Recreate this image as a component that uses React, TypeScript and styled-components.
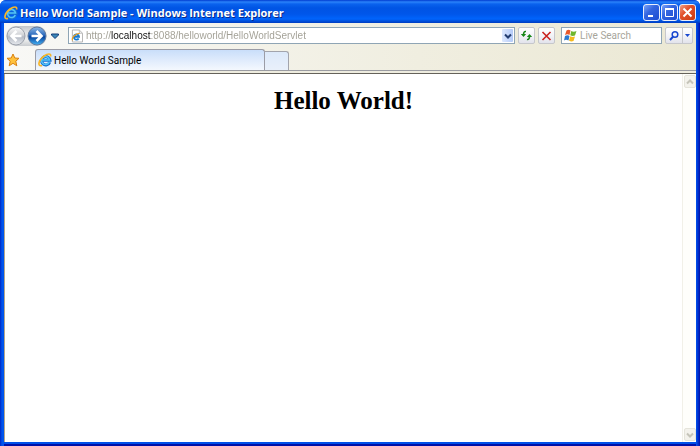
import React from "react";
import styled, { createGlobalStyle } from "styled-components";

const GlobalStyle = createGlobalStyle`
  * { box-sizing: border-box; }
  html, body { margin: 0; background: #fff; }
  body { font-family: Roboto, "Liberation Sans", sans-serif; font-size: 10px; }
  button, input { font: inherit; margin: 0; padding: 0; }
  svg { display: block; flex: none; }
`;

const Window = styled.div`
  height: 100vh;
  display: flex;
  flex-direction: column;
  border-radius: 6px 6px 0 0;
  background: linear-gradient(90deg, #0026c4 0, #0054ec 2px, #0054ec 4px, #0054ec calc(100% - 4px), #0042e0 calc(100% - 3px), #0010a8 100%);
  overflow: hidden;
`;

const TitleBar = styled.header`
  flex: none;
  height: 23px;
  padding: 2px 4px 0 4px;
  display: flex;
  align-items: center;
  gap: 2px;
  background: linear-gradient(#003bd0 0, #2a83fa 2px, #0a62ee 4px, #0054e4 8px, #0056ea 14px, #0064fc 19px, #0050dc 21px, #003cc0 23px);
`;

const Title = styled.h1`
  flex: 1;
  margin: 0;
  font: bold 11px/16px "Open Sans", sans-serif;
  color: #fff;
  text-shadow: 1px 1px 0 #0a2a88;
  white-space: nowrap;
`;

const CaptionButtons = styled.div`
  display: flex;
  gap: 1px;
`;

const CaptionButton = styled.button<{ $danger?: boolean }>`
  width: 17px;
  height: 17px;
  border: 1px solid #e8eefc;
  border-radius: 3px;
  display: grid;
  place-items: center;
  background: ${(p) =>
    p.$danger
      ? "linear-gradient(135deg, #f0a088, #e2512c 40%, #c93a10)"
      : "linear-gradient(135deg, #7ba2f6, #3365e0 40%, #1c4cd2)"};
`;

const Chrome = styled.div`
  flex: none;
  margin: 0 4px;
  background: linear-gradient(90deg, #f8f8f6, #f0eee0 60%, #ebe8d4);
`;

const NavBar = styled.nav`
  height: 25px;
  display: flex;
  align-items: center;
  padding: 0 3px 0 2px;
`;

const Travel = styled.div`
  display: flex;
  align-items: center;
  gap: 1px;
  margin-right: 6px;
`;

const TravelPair = styled.div`
  display: flex;
  gap: 1px;
  border-radius: 10px;
  background: linear-gradient(#c2c5ca, #dfe1e4 30%, #eceded 70%, #c9ccd0);
`;

const PlainButton = styled.button`
  border: 0;
  background: none;
  display: grid;
  place-items: center;
`;

const HistoryButton = styled(PlainButton)`
  width: 14px;
  height: 16px;
`;

const Field = styled.label<{ $search?: boolean }>`
  ${(p) => (p.$search ? "flex: none; width: 101px; margin: 0 3px;" : "flex: 1; min-width: 0; margin-right: 3px;")}
  height: 17px;
  display: flex;
  align-items: center;
  gap: 3px;
  padding: 0 1px 0 2px;
  border: 1px solid #8fa5b5;
  background: #fff;
`;

const TextInput = styled.input`
  flex: 1;
  min-width: 0;
  height: 15px;
  border: 0;
  outline: 0;
  background: none;
`;

const AddressInput = styled(TextInput)`
  font-family: "Liberation Sans", sans-serif;
  background: linear-gradient(90deg, #a09e93 25px, #111 25px, #111 65px, #a09e93 65px);
  background-clip: text;
  -webkit-background-clip: text;
  -webkit-text-fill-color: transparent;
`;

const SearchInput = styled(TextInput)`
  font-size: 10px;
  &::placeholder { color: #a7a59b; opacity: 1; }
`;

const DropButton = styled(PlainButton)`
  width: 11px;
  height: 13px;
  border-radius: 1px;
  background: linear-gradient(90deg, #dce8fe, #b4caf8);
`;

const ToolButton = styled.button`
  flex: none;
  width: 17px;
  height: 17px;
  margin-right: 3px;
  display: grid;
  place-items: center;
  border: 1px solid #c6c7cb;
  border-radius: 2px;
  background: linear-gradient(#fff, #f2f2f6 55%, #e2e3ec);
`;

const SearchGroup = styled.div`
  display: flex;
  height: 17px;
  border: 1px solid #c6c7cb;
  border-radius: 2px;
  background: linear-gradient(#fff, #f2f2f6 55%, #e2e3ec);
`;

const SearchPart = styled(PlainButton)<{ $narrow?: boolean }>`
  width: ${(p) => (p.$narrow ? 10 : 16)}px;
  ${(p) => p.$narrow && "border-left: 1px solid #c6c7cb;"}
`;

const TabBar = styled.div`
  height: 23px;
  display: flex;
  align-items: flex-end;
  border-bottom: 1px solid #9b9ca2;
`;

const FavoriteButton = styled(PlainButton)`
  width: 18px;
  height: 20px;
  margin-right: 13px;
`;

const Tab = styled.button`
  width: 230px;
  height: 21px;
  display: flex;
  align-items: center;
  gap: 2px;
  padding: 0 2px;
  border: 1px solid #9b9ca6;
  border-bottom: 0;
  border-radius: 3px 3px 0 0;
  background: linear-gradient(#c9defa, #dfebfc 50%, #f4f8fe);
  color: #000;
  text-align: left;
`;

const NewTab = styled.button`
  width: 24px;
  height: 19px;
  border: 1px solid #a2a4ac;
  border-left: 0;
  border-bottom: 0;
  border-radius: 0 3px 0 0;
  background: linear-gradient(#dce9fa, #e9f0fa);
`;

const Divider = styled.div`
  height: 3px;
  background: #eeecdf;
  border-bottom: 1px solid #65625a;
`;

const View = styled.div`
  flex: 1;
  min-height: 0;
  margin: 0 4px 4px;
  display: flex;
  background: #fff;
  border-left: 1px solid #b4a68c;
  box-shadow: 0 2px 0 #0050e8, 0 4px 0 #0010a8;
`;

const Page = styled.main`
  flex: 1;
  padding-top: 13px;
`;

const Heading = styled.h1`
  margin: 0;
  text-align: center;
  font: bold 25px/27px "Liberation Serif", serif;
  color: #000;
`;

const ScrollTrack = styled.div`
  flex: none;
  width: 14px;
  display: flex;
  flex-direction: column;
  justify-content: space-between;
  align-items: center;
  padding: 1px 0;
  border-left: 1px solid #f1f0e8;
  background: #fefefb;
`;

const ScrollButton = styled.button`
  width: 12px;
  height: 13px;
  display: grid;
  place-items: center;
  border: 1px solid #e5e4db;
  border-radius: 2px;
  background: #f3f2ec;
`;

function IeLogo() {
  return (
    <svg width="14" height="14" viewBox="0 0 28 28" fill="none" aria-hidden="true">
      <path d="M23.5 18.5A8.5 8.5 0 1 1 24 14.5H9" stroke="#1670d0" strokeWidth="6" />
      <path d="M22.5 18A8 8 0 1 1 23 14H9" stroke="#52c4f8" strokeWidth="3.2" />
      <path d="M8 25C-2 28 1 14 12 6C19 1 27 0 25 7" stroke="#f7b62a" strokeWidth="3.4" />
    </svg>
  );
}

function TravelIcon({ forward = false }: { forward?: boolean }) {
  const id = forward ? "travelForward" : "travelBack";
  return (
    <svg width="20" height="20" viewBox="0 0 20 20" fill="none" aria-hidden="true">
      <defs>
        <linearGradient id={id} x1="0" y1="0" x2="0" y2="1">
          <stop stopColor={forward ? "#8fb8e6" : "#fafafa"} />
          <stop offset=".45" stopColor={forward ? "#2b6abd" : "#d0d2d6"} />
          <stop offset=".55" stopColor={forward ? "#06439d" : "#b5bac4"} />
          <stop offset="1" stopColor={forward ? "#48b5f5" : "#e8ebef"} />
        </linearGradient>
      </defs>
      <circle cx="10" cy="10" r="9" fill={`url(#${id})`} stroke={forward ? "#5d799f" : "#9da2ac"} />
      <path
        d={forward ? "M4.5 10H14M9.5 5L14.5 10L9.5 15" : "M15.5 10H6M10.5 5L5.5 10L10.5 15"}
        stroke="#fff"
        strokeWidth="2.6"
      />
    </svg>
  );
}

function PageIcon() {
  return (
    <svg width="12" height="14" viewBox="0 0 13 14" fill="none" aria-hidden="true">
      <path d="M1.5 .5H9L12.5 4V13.5H1.5Z" fill="#fff" stroke="#b0b0b0" />
      <path d="M9 .5V4H12.5" stroke="#b8b8b8" />
      <path d="M8.3 9.6A2.8 2.8 0 1 1 8.7 7.8H3.5" stroke="#1478d0" strokeWidth="2" />
      <path d="M1.8 11.8C0 9.5 5 4 9.5 4" stroke="#f0a01c" strokeWidth="1.3" />
    </svg>
  );
}

function WindowsFlag() {
  return (
    <svg width="13" height="13" viewBox="0 0 26 26" aria-hidden="true">
      <path d="M5 3Q9 0 13 3L11 12Q7 9 2 12Z" fill="#e8582a" />
      <path d="M14.5 4Q19 7 25 4L22 13Q17 15 12.5 12.5Z" fill="#70b52c" />
      <path d="M2 14Q7 11 11 14L9 23Q4 20 0 23Z" fill="#2c79cf" />
      <path d="M12.5 14.5Q17 17 22 15L19 24Q14 26 10 23Z" fill="#f5b91d" />
    </svg>
  );
}

function Chevron({ up = false, color }: { up?: boolean; color: string }) {
  return (
    <svg width="8" height="6" viewBox="0 0 8 6" fill="none" aria-hidden="true">
      <path d={up ? "M1 4.5L4 1.5L7 4.5" : "M1 1.5L4 4.5L7 1.5"} stroke={color} strokeWidth="2" />
    </svg>
  );
}

export default function App() {
  return (
    <>
      <GlobalStyle />
      <Window>
        <TitleBar>
          <IeLogo />
          <Title>Hello World Sample - Windows Internet Explorer</Title>
          <CaptionButtons>
            <CaptionButton type="button" aria-label="Minimize">
              <svg width="13" height="13" viewBox="0 0 13 13"><path d="M3 9H8V11H3Z" fill="#fff" /></svg>
            </CaptionButton>
            <CaptionButton type="button" aria-label="Maximize">
              <svg width="13" height="13" viewBox="0 0 13 13" fill="none">
                <path d="M2.5 3V10.5H10.5V3" stroke="#fff" /><path d="M2 3H11" stroke="#fff" strokeWidth="2" />
              </svg>
            </CaptionButton>
            <CaptionButton type="button" aria-label="Close" $danger>
              <svg width="13" height="13" viewBox="0 0 13 13"><path d="M2.5 2.5L10.5 10.5M10.5 2.5L2.5 10.5" stroke="#fff" strokeWidth="2" /></svg>
            </CaptionButton>
          </CaptionButtons>
        </TitleBar>

        <Chrome>
          <NavBar aria-label="Navigation">
            <Travel>
              <TravelPair>
                <PlainButton type="button" aria-label="Back"><TravelIcon /></PlainButton>
                <PlainButton type="button" aria-label="Forward"><TravelIcon forward /></PlainButton>
              </TravelPair>
              <HistoryButton type="button" aria-label="Recent pages">
                <svg width="8" height="6" viewBox="0 0 8 6"><path d="M.5 1H7.5V2L4 5.5L.5 2Z" fill="#3b87b8" stroke="#123c78" /></svg>
              </HistoryButton>
            </Travel>
            <Field>
              <PageIcon />
              <AddressInput
                type="text"
                aria-label="Address"
                spellCheck={false}
                defaultValue="http://localhost:8088/helloworld/HelloWorldServlet"
              />
              <DropButton type="button" aria-label="Show addresses"><Chevron color="#233d70" /></DropButton>
            </Field>
            <ToolButton type="button" aria-label="Refresh">
              <svg width="13" height="13" viewBox="0 0 13 13" fill="none">
                <path d="M6 2.5Q3.5 2 3.5 6M7 10.5Q9.5 11 9.5 7" stroke="#168716" strokeWidth="1.6" />
                <path d="M.8 5H6.2L3.5 8ZM6.8 8H12.2L9.5 5Z" fill="#168716" />
              </svg>
            </ToolButton>
            <ToolButton type="button" aria-label="Stop">
              <svg width="13" height="13" viewBox="0 0 13 13"><path d="M2.5 3L10.5 11M10.5 3L2.5 11" stroke="#c9201c" strokeWidth="1.6" /></svg>
            </ToolButton>
            <Field $search>
              <WindowsFlag />
              <SearchInput type="text" aria-label="Live Search" placeholder="Live Search" />
            </Field>
            <SearchGroup>
              <SearchPart type="button" aria-label="Search">
                <svg width="12" height="12" viewBox="0 0 12 12" fill="none">
                  <circle cx="7" cy="4.5" r="2.8" stroke="#1746cf" strokeWidth="1.5" />
                  <path d="M5 6.8L2 10" stroke="#1746cf" strokeWidth="2" />
                </svg>
              </SearchPart>
              <SearchPart type="button" aria-label="Search options" $narrow>
                <svg width="5" height="3" viewBox="0 0 5 3"><path d="M0 0H5L2.5 3Z" fill="#1746cf" /></svg>
              </SearchPart>
            </SearchGroup>
          </NavBar>
          <TabBar>
            <FavoriteButton type="button" aria-label="Favorites">
              <svg width="14" height="14" viewBox="0 0 14 14">
                <path d="M7 1L8.8 5L13 5.3L9.8 8.2L10.8 12.8L7 10.3L3.2 12.8L4.2 8.2L1 5.3L5.2 5Z" fill="#ffc13c" stroke="#d9800f" />
              </svg>
            </FavoriteButton>
            <Tab type="button"><IeLogo />Hello World Sample</Tab>
            <NewTab type="button" aria-label="New tab" />
          </TabBar>
          <Divider />
        </Chrome>

        <View>
          <Page><Heading>Hello World!</Heading></Page>
          <ScrollTrack>
            <ScrollButton type="button" aria-label="Scroll up"><Chevron up color="#c5c4b9" /></ScrollButton>
            <ScrollButton type="button" aria-label="Scroll down"><Chevron color="#c5c4b9" /></ScrollButton>
          </ScrollTrack>
        </View>
      </Window>
    </>
  );
}
